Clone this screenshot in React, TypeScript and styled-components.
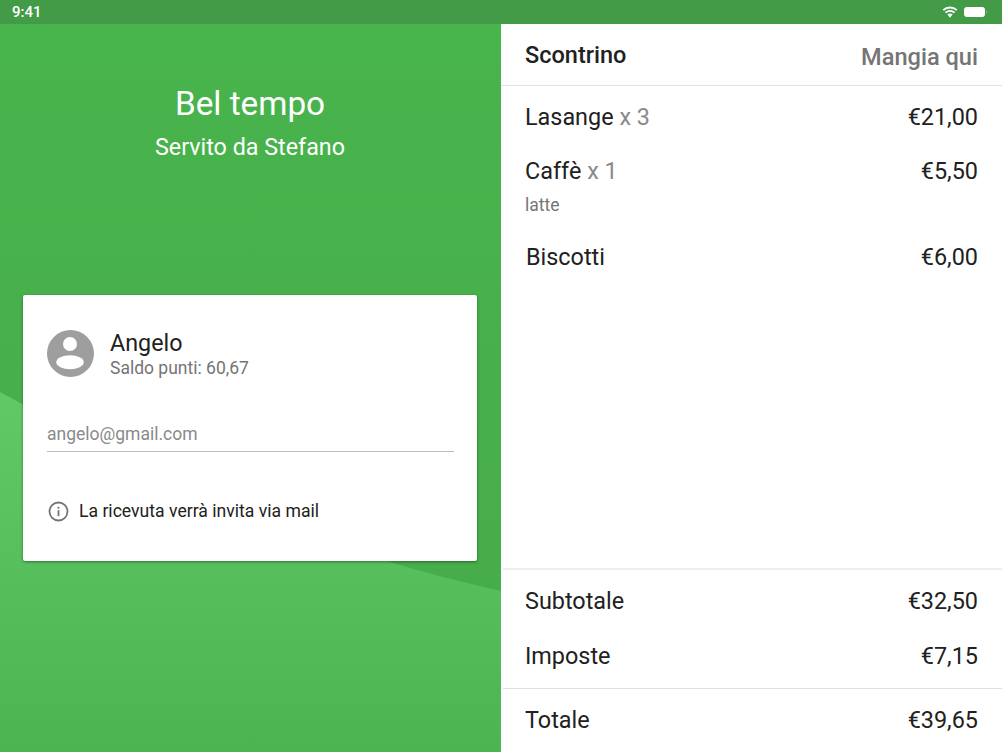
import React from 'react';
import styled, { createGlobalStyle } from 'styled-components';

const GlobalStyle = createGlobalStyle`
  html, body { margin: 0; padding: 0; background: #fff; }
  body { font-family: Roboto, "Liberation Sans", sans-serif; color: #212121; }
`;

const Page = styled.div`
  width: 1002px;
  height: 752px;
  display: flex;
  flex-direction: column;
  overflow: hidden;
`;

const StatusBar = styled.div`
  height: 24px;
  flex: none;
  background: #439a47;
  color: #fff;
  display: flex;
  align-items: center;
  justify-content: space-between;
  padding: 0 14px 0 12px;
  font-size: 15px;
  font-weight: 500;
`;

const StatusIcons = styled.div`
  display: flex;
  align-items: center;
  gap: 6px;
`;

const Main = styled.div`
  flex: 1;
  display: flex;
  min-height: 0;
`;

const LeftPanel = styled.section`
  width: 501px;
  flex: none;
  position: relative;
  background: linear-gradient(180deg, #48b44c 0%, #47ad4a 78%);
  display: flex;
  flex-direction: column;
  align-items: center;
  box-sizing: border-box;
  padding: 60px 24px 0 23px;
`;

const Wave = styled.svg`
  position: absolute;
  left: 0;
  top: 0;
`;

const Title = styled.h1`
  position: relative;
  margin: 0;
  font-size: 33.3px;
  line-height: 40px;
  font-weight: 400;
  color: #fff;
`;

const Subtitle = styled.p`
  position: relative;
  margin: 3px 0 0;
  font-size: 23.3px;
  line-height: 40px;
  font-weight: 400;
  color: #fff;
`;

const Card = styled.div`
  position: relative;
  margin-top: 128px;
  width: 454px;
  height: 266px;
  box-sizing: border-box;
  padding: 33px 23px 0 24px;
  background: #fff;
  border-radius: 2px;
  box-shadow: 0 1px 3px rgba(0, 0, 0, 0.4);
`;

const Customer = styled.div`
  display: flex;
  align-items: center;
  gap: 16px;
`;

const CustomerName = styled.div`
  font-size: 23.3px;
  line-height: 30px;
  color: #212121;
`;

const Points = styled.div`
  font-size: 17.5px;
  line-height: 20px;
  color: #757575;
`;

const EmailField = styled.div`
  margin-top: 41px;
  height: 32px;
  line-height: 30px;
  font-size: 17.5px;
  color: #8a8a8a;
  border-bottom: 1px solid #bdbdbd;
`;

const Notice = styled.div`
  margin-top: 47px;
  display: flex;
  align-items: center;
  gap: 9px;
  font-size: 17.6px;
  line-height: 24px;
  color: #212121;
`;

const RightPanel = styled.section`
  flex: 1;
  min-width: 0;
  display: flex;
  flex-direction: column;
  background: #fff;
`;

const ReceiptHeader = styled.header`
  height: 62px;
  flex: none;
  box-sizing: border-box;
  display: flex;
  align-items: center;
  justify-content: space-between;
  padding: 0 24px;
  border-bottom: 1px solid #e0e0e0;
`;

const ReceiptTitle = styled.h2`
  margin: 0;
  font-size: 23.5px;
  font-weight: 500;
  color: #212121;
`;

const ServiceMode = styled.span`
  font-size: 23.6px;
  font-weight: 500;
  color: #757575;
  position: relative;
  top: 2px;
`;

const Items = styled.div`
  flex: 1;
  padding-top: 13px;
`;

const Row = styled.div<{ $h?: number; $indent?: number }>`
  height: ${({ $h }) => $h ?? 55}px;
  display: flex;
  align-items: flex-start;
  justify-content: space-between;
  padding: 0 24px 0 ${({ $indent }) => $indent ?? 24}px;
  font-size: 23.4px;
  line-height: 36px;
  color: #212121;
`;

const Quantity = styled.span`
  color: #8a8a8a;
`;

const Note = styled.div`
  padding: 0 24px;
  margin-top: -16px;
  height: 50px;
  font-size: 17.5px;
  line-height: 32px;
  color: #757575;
`;

const Totals = styled.div`
  flex: none;
  margin-left: 2px;
  border-top: 2px solid #eeeeee;
  padding-top: 13px;
`;

const GrandTotal = styled.div`
  flex: none;
  margin-left: 2px;
  border-top: 1px solid #e0e0e0;
  padding-top: 13px;
  height: 64px;
  box-sizing: border-box;
`;

const items = [
  { name: 'Lasange', qty: 3, price: '€21,00' },
  { name: 'Caffè', qty: 1, price: '€5,50', note: 'latte' },
];

const App = () => (
  <Page>
    <GlobalStyle />
    <StatusBar>
      <span>9:41</span>
      <StatusIcons>
        <svg width="16" height="12" viewBox="0 0 16 12">
          <path d="M8 11.7 5.4 8.6a3.9 3.9 0 0 1 5.2 0z" fill="#fff" />
          <path d="M3.5 6.6a6.6 6.6 0 0 1 9 0M1.2 4.1a10 10 0 0 1 13.6 0" fill="none" stroke="#fff" strokeWidth="1.9" />
        </svg>
        <svg width="24" height="12" viewBox="0 0 24 12">
          <rect x="0.5" y="1.5" width="20" height="9" rx="2" fill="#fff" stroke="#fff" />
          <rect x="22" y="4.5" width="1.2" height="3" fill="#6fb572" />
        </svg>
      </StatusIcons>
    </StatusBar>
    <Main>
      <LeftPanel>
        <Wave width="501" height="728" viewBox="0 0 501 728">
          <defs>
            <linearGradient id="waveFill" gradientUnits="userSpaceOnUse" x1="0" y1="368" x2="0" y2="728">
              <stop offset="0" stopColor="#61c966" />
              <stop offset="1" stopColor="#4cb551" />
            </linearGradient>
          </defs>
          <path d="M0 368C130 440 290 520 501 567V728H0Z" fill="url(#waveFill)" />
        </Wave>
        <Title>Bel tempo</Title>
        <Subtitle>Servito da Stefano</Subtitle>
        <Card>
          <Customer>
            <svg width="47" height="47" viewBox="0 0 47 47">
              <circle cx="23.5" cy="23.5" r="23.5" fill="#9e9e9e" />
              <circle cx="23" cy="14" r="7" fill="#fff" />
              <ellipse cx="23" cy="32.3" rx="13.7" ry="7" fill="#fff" />
            </svg>
            <div>
              <CustomerName>Angelo</CustomerName>
              <Points>Saldo punti: 60,67</Points>
            </div>
          </Customer>
          <EmailField>angelo@gmail.com</EmailField>
          <Notice>
            <svg width="23" height="23" viewBox="0 0 23 23">
              <circle cx="11.5" cy="11.5" r="9" fill="none" stroke="#757575" strokeWidth="1.8" />
              <rect x="10.6" y="10.2" width="1.8" height="6" fill="#757575" />
              <rect x="10.6" y="6.8" width="1.8" height="1.9" fill="#757575" />
            </svg>
            La ricevuta verrà invita via mail
          </Notice>
        </Card>
      </LeftPanel>
      <RightPanel>
        <ReceiptHeader>
          <ReceiptTitle>Scontrino</ReceiptTitle>
          <ServiceMode>Mangia qui</ServiceMode>
        </ReceiptHeader>
        <Items>
          {items.map((item) => (
            <React.Fragment key={item.name}>
              <Row $h={item.note ? 52 : 54}>
                <span>
                  {item.name} <Quantity>x {item.qty}</Quantity>
                </span>
                <span>{item.price}</span>
              </Row>
              {item.note && <Note>{item.note}</Note>}
            </React.Fragment>
          ))}
          <Row $indent={25}>
            <span>Biscotti</span>
            <span>€6,00</span>
          </Row>
        </Items>
        <Totals>
          <Row $h={55} $indent={22}>
            <span>Subtotale</span>
            <span>€32,50</span>
          </Row>
          <Row $h={50} $indent={22}>
            <span>Imposte</span>
            <span>€7,15</span>
          </Row>
        </Totals>
        <GrandTotal>
          <Row $h={40} $indent={22}>
            <span>Totale</span>
            <span>€39,65</span>
          </Row>
        </GrandTotal>
      </RightPanel>
    </Main>
  </Page>
);

export default App;
